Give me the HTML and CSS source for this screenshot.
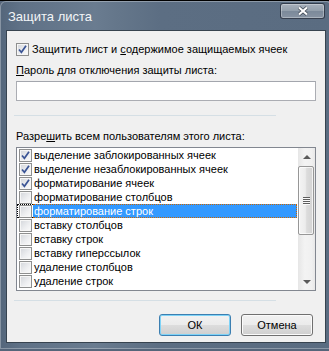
FILE: index.html
```html
<!DOCTYPE html>
<html lang="ru">
<head>
    <meta charset="UTF-8">
    <title>Защита листа</title>
    <link rel="stylesheet" href="styles.css">
</head>
<body>
    <div class="window">
        <div class="titlebar">
            <span class="title">Защита листа</span>
            <button class="close">
                <svg width="12" height="10" viewBox="0 0 12 10">
                    <path d="M2 1.5 10 8.5 M10 1.5 2 8.5" stroke="#39424d" stroke-width="3.6" fill="none"/>
                    <path d="M2 1.5 10 8.5 M10 1.5 2 8.5" stroke="#fff" stroke-width="2.2" fill="none"/>
                </svg>
            </button>
        </div>

        <div class="client">
            <div class="protect">
                <span class="box"><svg width="11" height="11" viewBox="0 0 11 11"><path d="M2 5.5 4.4 8.3 9 1.8" fill="none" stroke="#3a5495" stroke-width="1.7"/></svg></span>
                <span>Защитить лист и <u>с</u>одержимое защищаемых ячеек</span>
            </div>

            <div class="field-label"><u>П</u>ароль для отключения защиты листа:</div>
            <div class="input"></div>

            <div class="sep sep-top"></div>

            <div class="field-label list-label">Разре<u>ш</u>ить всем пользователям этого листа:</div>
            <div class="listbox">
                <ul class="items">
                    <li><span class="mark"><span class="box"><svg width="11" height="11" viewBox="0 0 11 11"><path d="M2 5.5 4.4 8.3 9 1.8" fill="none" stroke="#3a5495" stroke-width="1.7"/></svg></span></span><span class="text">выделение заблокированных ячеек</span></li>
                    <li><span class="mark"><span class="box"><svg width="11" height="11" viewBox="0 0 11 11"><path d="M2 5.5 4.4 8.3 9 1.8" fill="none" stroke="#3a5495" stroke-width="1.7"/></svg></span></span><span class="text">выделение незаблокированных ячеек</span></li>
                    <li><span class="mark"><span class="box"><svg width="11" height="11" viewBox="0 0 11 11"><path d="M2 5.5 4.4 8.3 9 1.8" fill="none" stroke="#3a5495" stroke-width="1.7"/></svg></span></span><span class="text">форматирование ячеек</span></li>
                    <li><span class="mark"><span class="box"></span></span><span class="text">форматирование столбцов</span></li>
                    <li class="selected"><span class="mark"><span class="box"></span></span><span class="text">форматирование строк</span></li>
                    <li><span class="mark"><span class="box"></span></span><span class="text">вставку столбцов</span></li>
                    <li><span class="mark"><span class="box"></span></span><span class="text">вставку строк</span></li>
                    <li><span class="mark"><span class="box"></span></span><span class="text">вставку гиперссылок</span></li>
                    <li><span class="mark"><span class="box"></span></span><span class="text">удаление столбцов</span></li>
                    <li><span class="mark"><span class="box"></span></span><span class="text">удаление строк</span></li>
                </ul>
                <div class="scrollbar">
                    <div class="arrow"><span class="tri up"></span></div>
                    <div class="track">
                        <div class="thumb"><span class="grip"></span></div>
                    </div>
                    <div class="arrow"><span class="tri down"></span></div>
                </div>
            </div>

            <div class="sep sep-bottom"></div>

            <div class="buttons">
                <button class="btn default">ОК</button>
                <button class="btn">Отмена</button>
            </div>
        </div>
    </div>
</body>
</html>
```

FILE: styles.css
```css
body {
    margin: 0;
    width: 329px;
    height: 351px;
    overflow: hidden;
    background: linear-gradient(to bottom, #000 0, #000 1px, #55657a 1px);
    font-family: "Liberation Sans", Arial, sans-serif;
    font-size: 11px;
    color: #000;
}
.window {
    box-sizing: border-box;
    width: 332px;
    height: 348px;
    margin-top: 1px;
    padding: 0 6px 6px 6px;
    border-radius: 6px 6px 0 0;
    background: linear-gradient(to right, #54667b 0, #5f7186 20px, #6a7c90 95px, #65778b 115px, #5c6e83 160px, #5a6c81 100%);
    box-shadow: inset 0 0 0 1px rgba(255, 255, 255, 0.3);
    display: flex;
    flex-direction: column;
}
.titlebar {
    height: 29px;
    flex-shrink: 0;
    display: flex;
    align-items: flex-start;
    justify-content: space-between;
    padding-left: 2px;
}
.title {
    margin-top: 8px;
    line-height: 16px;
    font-size: 13px;
    color: #f3f5f7;
}
.close {
    box-sizing: border-box;
    width: 45px;
    height: 16px;
    margin-top: 2px;
    margin-right: 1px;
    padding: 0;
    border: 1px solid rgba(35, 45, 60, 0.85);
    border-radius: 3px;
    background: linear-gradient(#a7b0bb, #929eab 50%, #7b899a 50%, #8793a2);
    box-shadow: inset 0 0 0 1px rgba(255, 255, 255, 0.3);
    display: flex;
    align-items: center;
    justify-content: center;
}

/* dialog body */
.client {
    flex: 1;
    border: 1px solid #37434f;
    background: #f0f0f0;
    padding: 11px 9px 0 9px;
    display: flex;
    flex-direction: column;
}
.box {
    box-sizing: border-box;
    width: 13px;
    height: 13px;
    flex-shrink: 0;
    border: 1px solid #8e8f8f;
    background: linear-gradient(135deg, #d2d5da, #eeeff1 60%, #fbfbfb);
    box-shadow: inset 0 0 0 1px #f6f6f6;
    display: flex;
}
.protect {
    height: 15px;
    display: flex;
    align-items: center;
    gap: 3px;
    line-height: 15px;
    white-space: nowrap;
}
.field-label {
    margin-top: 6px;
    line-height: 15px;
    white-space: nowrap;
}
.input {
    box-sizing: border-box;
    height: 20px;
    margin-top: 3px;
    border: 1px solid #abadb3;
    border-top-color: #a3a6ad;
    background: #fff;
}
.sep {
    width: 262px;
    height: 1px;
    margin-left: -2px;
    background: #d5dfe5;
}
.sep-top {
    margin-top: 14px;
}
.list-label {
    margin-top: 13px;
}

/* list with checkboxes */
.listbox {
    box-sizing: border-box;
    height: 144px;
    margin-top: 3px;
    border: 1px solid #828790;
    background: #fff;
    display: flex;
}
.items {
    flex: 1;
    margin: 0;
    padding: 0;
    list-style: none;
}
.items li {
    height: 14px;
    display: flex;
}
.mark {
    box-sizing: border-box;
    width: 16px;
    padding-left: 1px;
    border: 1px dotted transparent;
    border-right: 0;
}
.text {
    flex: 1;
    margin-right: 1px;
    padding-left: 1px;
    line-height: 12px;
    white-space: nowrap;
    border: 1px dotted transparent;
    border-left: 0;
}
.items li.selected .mark {
    border-color: #000;
}
.items li.selected .text {
    background: #3399ff;
    color: #fff;
    border-color: #cc6600;
}
.scrollbar {
    width: 17px;
    display: flex;
    flex-direction: column;
    background: linear-gradient(to right, #e6e6e6, #f3f3f3 40%, #f0f0f0 80%, #e8e8e8);
}
.arrow {
    height: 17px;
    display: flex;
    align-items: center;
    justify-content: center;
}
.tri {
    width: 0;
    height: 0;
    border-left: 4px solid transparent;
    border-right: 4px solid transparent;
}
.tri.up {
    border-bottom: 4px solid #5a5a5a;
}
.tri.down {
    border-top: 4px solid #5a5a5a;
}
.track {
    flex: 1;
}
.thumb {
    box-sizing: border-box;
    height: 69px;
    margin: 1px 1px 0 0;
    border: 1px solid #979797;
    border-radius: 2px;
    background: linear-gradient(to right, #f4f4f4, #ececec 45%, #dcdcdc 55%, #d3d3d3);
    box-shadow: inset 0 0 0 1px rgba(255, 255, 255, 0.7);
    display: flex;
    align-items: center;
    justify-content: center;
}
.grip {
    width: 7px;
    height: 8px;
    background: repeating-linear-gradient(to bottom, #5e5e5e 0, #5e5e5e 1px, #fafafa 1px, #fafafa 2px);
}

/* buttons */
.sep-bottom {
    margin-top: 9px;
}
.buttons {
    margin-top: 13px;
    padding-right: 3px;
    display: flex;
    justify-content: flex-end;
    gap: 10px;
}
.btn {
    box-sizing: border-box;
    width: 72px;
    height: 22px;
    padding: 0;
    border: 1px solid #707070;
    border-radius: 3px;
    background: linear-gradient(#f2f2f2, #ebebeb 50%, #dddddd 50%, #cfcfcf);
    box-shadow: inset 0 0 0 1px #fbfbfb;
    font-family: inherit;
    font-size: 11px;
    color: #000;
}
.btn.default {
    border-color: #3c7fb1;
    box-shadow: inset 0 0 0 1px #7fd3f7;
}
```
